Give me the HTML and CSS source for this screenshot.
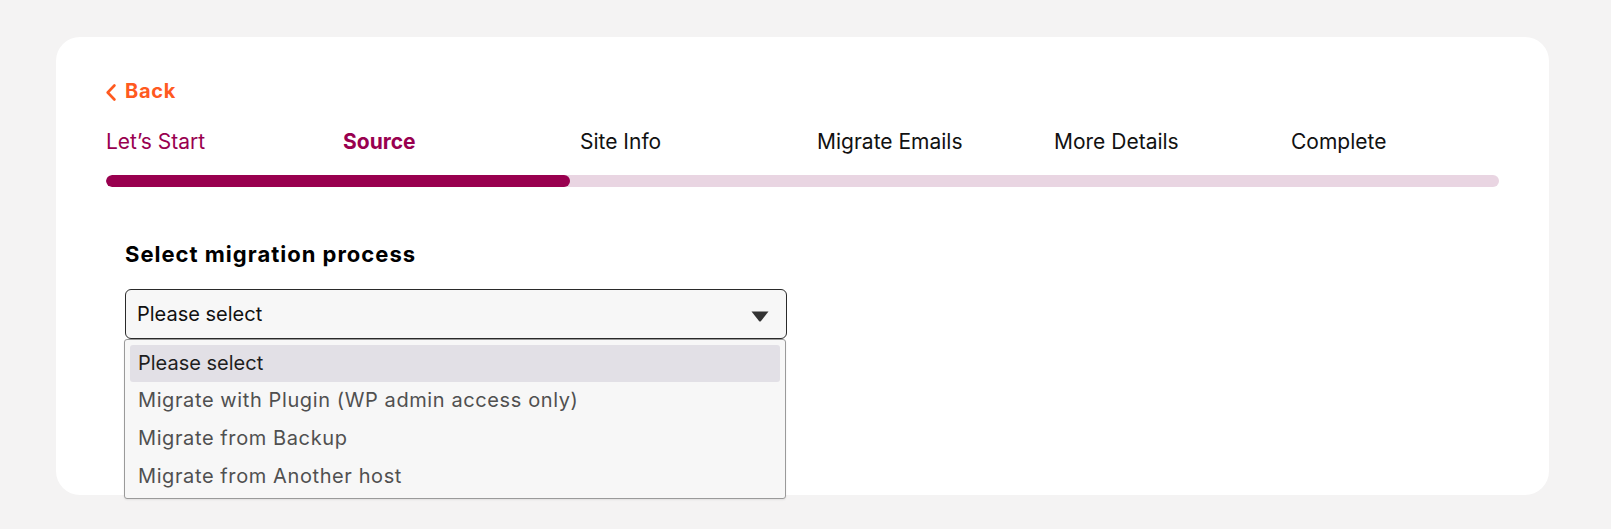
FILE: index.html
```html
<!DOCTYPE html>
<html lang="en">
<head>
<meta charset="utf-8">
<title>Migration</title>
<link rel="stylesheet" href="styles.css">
</head>
<body>
<main class="card">
  <a class="back" href="#">
    <svg class="back-icon" width="10" height="17" viewBox="0 0 10 17"><path d="M8.4 1.5 L1.7 8.5 L8.4 15.5" fill="none" stroke="#ff5a1f" stroke-width="2.6" stroke-linecap="round" stroke-linejoin="round"/></svg>
    <span>Back</span>
  </a>
  <div class="steps">
    <div class="step done">Let’s Start</div>
    <div class="step active">Source</div>
    <div class="step">Site Info</div>
    <div class="step">Migrate Emails</div>
    <div class="step">More Details</div>
    <div class="step">Complete</div>
  </div>
  <div class="track"><div class="fill" style="width:33.333%"></div></div>
  <section class="form">
    <h2 class="label">Select migration process</h2>
    <div class="select-wrap">
      <div class="select">
        <span>Please select</span>
        <svg class="caret" width="18" height="11" viewBox="0 0 18 11"><path d="M0.5 0.5 H17.5 L10 10 Q9 11 8 10 Z" fill="#333"/></svg>
      </div>
      <ul class="options">
        <li class="opt selected">Please select</li>
        <li class="opt">Migrate with Plugin (WP admin access only)</li>
        <li class="opt">Migrate from Backup</li>
        <li class="opt">Migrate from Another host</li>
      </ul>
    </div>
  </section>
</main>
</body>
</html>
```
FILE: styles.css
```css
* { box-sizing: border-box; }
html, body { margin: 0; padding: 0; }
body {
  background: #f4f3f3;
  font-family: Inter, "Noto Sans", sans-serif;
  color: #111;
  padding: 37px 62px 34px 56px;
  height: 529px;
  overflow: hidden;
}
.card {
  background: #fff;
  border-radius: 24px;
  height: 458px;
  padding: 42px 50px 0 50px;
}
.back {
  display: inline-flex;
  align-items: center;
  gap: 9px;
  color: #ff5a1f;
  font-weight: 700;
  font-size: 20px;
  letter-spacing: 0.7px;
  line-height: 24px;
  text-decoration: none;
}
.back-icon { margin-top: 3px; }
.steps {
  display: grid;
  grid-template-columns: repeat(6, 237px);
  margin-top: 25px;
  font-size: 21px;
  line-height: 24px;
}
.step.done { color: #99004f; }
.step.active { color: #99004f; font-weight: 700; }
.track {
  margin-top: 21px;
  width: 1393px;
  height: 12px;
  border-radius: 6px;
  background: #e9d5e2;
  overflow: hidden;
}
.fill { height: 100%; background: #99004f; border-radius: 6px; }
.form { padding-left: 19px; }
.label {
  margin: 55px 0 0 0;
  font-size: 22px;
  letter-spacing: 1px;
  line-height: 24px;
  font-weight: 700;
  color: #000;
}
.select-wrap { position: relative; margin-top: 23px; width: 662px; }
.select {
  height: 50px;
  border: 1px solid #2a2a2a;
  border-radius: 6px;
  background: #f7f7f7;
  display: flex;
  align-items: center;
  justify-content: space-between;
  padding: 0 17px 0 11px;
  font-size: 20px;
  color: #111;
}
.caret { margin-top: 4px; }
.options {
  position: absolute;
  left: -1px;
  top: 50px;
  width: 662px;
  margin: 0;
  padding: 5px 5px 2px;
  list-style: none;
  background: #f7f7f7;
  border: 1px solid #9a9a9a;
  border-radius: 3px;
  box-shadow: 0 1px 2px rgba(0,0,0,0.08);
}
.opt {
  height: 38px;
  line-height: 37px;
  padding-left: 8px;
  font-size: 20px;
  letter-spacing: 0.6px;
  color: #505050;
  border-radius: 3px;
}
.opt.selected { background: #e2e0e6; color: #1e1e1e; height: 37px; letter-spacing: 0; }
```
